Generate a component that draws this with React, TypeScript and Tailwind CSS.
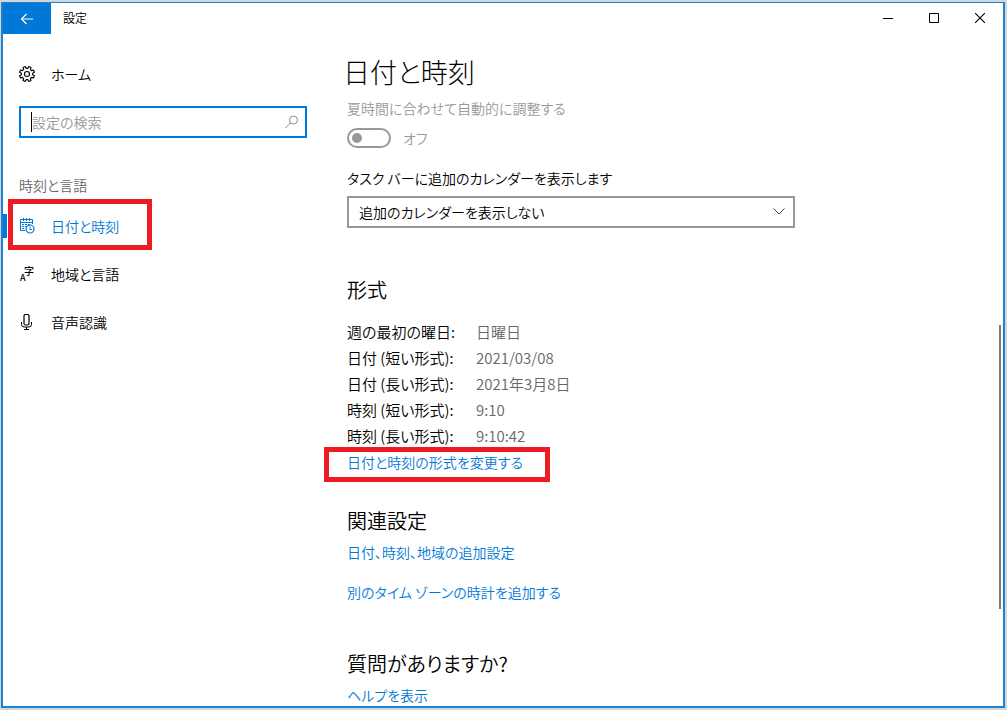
import type { ReactNode } from "react";

type NavItem = {
  label: string;
  icon: ReactNode;
  active?: boolean;
};

// eight flat-topped teeth around a 16px circle
const getGearPath = () => {
  const points: string[] = [];

  for (let i = 0; i < 8; i++) {
    const base = i * 45 + 22.5;

    [
      [-14, 5.7],
      [-9, 7.6],
      [9, 7.6],
      [14, 5.7],
    ].forEach(([offset, radius]) => {
      const angle = ((base + offset) * Math.PI) / 180;
      points.push(
        `${(8 + radius * Math.cos(angle)).toFixed(2)} ${(8 + radius * Math.sin(angle)).toFixed(2)}`,
      );
    });
  }

  return `M${points.join("L")}Z`;
};

const GearIcon = () => (
  <svg viewBox="0 0 16 16" className="size-4" fill="none" stroke="currentColor" aria-hidden="true">
    <path d={getGearPath()} strokeWidth="1.1" strokeLinejoin="round" />
    <circle cx="8" cy="8" r="2.5" strokeWidth="1.1" />
  </svg>
);

const CalendarClockIcon = () => (
  <svg viewBox="0 0 16 16" className="size-4" fill="none" stroke="currentColor" aria-hidden="true">
    <path d="M6 12.5H1.5V1.5H13.5V6M1.5 4.5H13.5M4.5 0V3M7.5 0V3M10.5 0V3" />
    <path d="M3 6.5H12M3 8.5H7M3 10.5H6" strokeDasharray="2 1" />
    <circle cx="11" cy="11" r="4" strokeWidth="1.2" />
    <path d="M11 8.5V11.5H13" />
  </svg>
);

const LanguageIcon = () => (
  <svg viewBox="0 0 16 16" className="size-4 overflow-visible" fill="currentColor" aria-hidden="true">
    <text x="1" y="15" fontSize="9" fontWeight="500">
      A
    </text>
    <text x="5" y="9" fontSize="10" fontWeight="500">
      字
    </text>
  </svg>
);

const MicIcon = () => (
  <svg viewBox="0 0 16 16" className="size-4" fill="none" stroke="currentColor" aria-hidden="true">
    <rect x="5" y="0.5" width="5" height="10.5" rx="1.5" strokeWidth="1.2" />
    <path d="M2.5 8V10.5Q2.5 13 5 13H10Q12.5 13 12.5 10.5V8M7.5 13V15.5M5 15.5H10" />
  </svg>
);

const NAV_ITEMS: NavItem[] = [
  { label: "日付と時刻", icon: <CalendarClockIcon />, active: true },
  { label: "地域と言語", icon: <LanguageIcon /> },
  { label: "音声認識", icon: <MicIcon /> },
];

const FORMATS = [
  ["週の最初の曜日:", "日曜日"],
  ["日付 (短い形式):", "2021/03/08"],
  ["日付 (長い形式):", "2021年3月8日"],
  ["時刻 (短い形式):", "9:10"],
  ["時刻 (長い形式):", "9:10:42"],
];

const TitleBar = () => (
  <header className="flex h-[31px] items-start">
    <button
      type="button"
      aria-label="戻る"
      className="flex h-full w-12 items-center justify-center bg-[#0078d7] text-white"
    >
      <svg viewBox="0 0 14 12" className="h-3 w-3.5" fill="none" stroke="currentColor" strokeWidth="1.2">
        <path d="M13 6H1.5M6.5 1L1.5 6L6.5 11" />
      </svg>
    </button>
    <span className="pl-3 text-[12px] leading-[30px]">設定</span>

    <div className="ml-auto flex h-[30px]">
      <button type="button" aria-label="最小化" className="flex w-[46px] items-center justify-center">
        <svg viewBox="0 0 10 10" className="size-2.5" stroke="currentColor">
          <path d="M0 5.5H10" />
        </svg>
      </button>
      <button type="button" aria-label="最大化" className="flex w-[46px] items-center justify-center">
        <svg viewBox="0 0 10 10" className="size-2.5" fill="none" stroke="currentColor">
          <path d="M0.5 0.5H9.5V9.5H0.5Z" />
        </svg>
      </button>
      <button type="button" aria-label="閉じる" className="flex w-[46px] items-center justify-center">
        <svg viewBox="0 0 10 10" className="size-2.5" stroke="currentColor" strokeWidth="1.1">
          <path d="M0 0L10 10M10 0L0 10" />
        </svg>
      </button>
    </div>
  </header>
);

const Sidebar = () => (
  <aside className="w-80 shrink-0 pt-4">
    <a href="#home" className="flex h-12 items-center gap-4 pl-4">
      <GearIcon />
      ホーム
    </a>

    <div className="mx-4 mt-2 flex h-8 items-center border-2 border-[#0078d7] pr-1.5 pl-2.5">
      <span className="h-5 w-px bg-black" />
      <input
        type="text"
        aria-label="設定の検索"
        placeholder="設定の検索"
        className="h-5 min-w-0 flex-1 leading-5 outline-none placeholder:text-[#999999]"
      />
      <svg viewBox="0 0 14 14" className="size-3.5 text-[#8a8a8a]" fill="none" stroke="currentColor" aria-hidden="true">
        <circle cx="8.5" cy="5" r="4" />
        <path d="M5.5 8L0.5 13" />
      </svg>
    </div>

    <h2 className="mt-[35px] pl-4 leading-6 text-[#666666]">時刻と言語</h2>

    <nav className="mt-[5px]">
      {NAV_ITEMS.map((item) => (
        <a
          key={item.label}
          href="#"
          aria-current={item.active ? "page" : undefined}
          className={
            item.active
              ? "relative flex h-12 items-center gap-4 pl-4 text-[#0078d7]"
              : "flex h-12 items-center gap-4 pl-4"
          }
        >
          {item.active && (
            <>
              <span className="absolute top-3 left-0 h-6 w-1 bg-[#0078d7]" />
              <span className="absolute -top-[3px] left-[5px] h-[51px] w-36 border-5 border-[#ed1c24]" />
            </>
          )}
          {item.icon}
          {item.label}
        </a>
      ))}
    </nav>
  </aside>
);

const DateTimePage = () => (
  <main className="min-w-0 flex-1 pt-[18px] pl-6">
    <h1 className="-ml-1 text-[27px] leading-10 font-light">日付と時刻</h1>

    <label htmlFor="dst" className="mt-1 block leading-6 text-[#999999]">
      夏時間に合わせて自動的に調整する
    </label>
    <div className="mt-2 flex h-5 items-center gap-3 text-[#999999]">
      <input
        id="dst"
        type="checkbox"
        role="switch"
        disabled
        className="flex h-5 w-11 appearance-none items-center rounded-full border-2 border-[#999999] pl-[3px] before:size-2.5 before:rounded-full before:bg-[#999999] before:content-['']"
      />
      <span>オフ</span>
    </div>

    <label htmlFor="calendar" className="mt-[18px] block leading-6">
      タスク バーに追加のカレンダーを表示します
    </label>
    <div className="relative mt-1.5 max-w-md">
      <select
        id="calendar"
        className="block h-8 w-full appearance-none border-2 border-[#999999] bg-white pl-2.5"
      >
        <option>追加のカレンダーを表示しない</option>
      </select>
      <svg
        viewBox="0 0 12 7"
        className="pointer-events-none absolute top-3 right-2.5 h-[7px] w-3 text-[#444444]"
        fill="none"
        stroke="currentColor"
        aria-hidden="true"
      >
        <path d="M0.5 0.5L6 6L11.5 0.5" />
      </svg>
    </div>

    <h2 className="mt-[46px] text-[20px] leading-8 font-[350]">形式</h2>
    <table className="mt-[13px] text-[15px]">
      <tbody>
        {FORMATS.map(([name, value]) => (
          <tr key={name} className="h-[26px]">
            <th scope="row" className="w-[129px] p-0 text-left leading-5 font-[350]">
              {name}
            </th>
            <td className="p-0 leading-5 text-[#666666]">{value}</td>
          </tr>
        ))}
      </tbody>
    </table>
    <div className="relative mt-[3px] w-fit leading-5">
      <a href="#format" className="block text-[#0078d7]">
        日付と時刻の形式を変更する
      </a>
      <span className="pointer-events-none absolute -top-[5px] -left-[23px] h-[35px] w-[226px] border-5 border-[#ed1c24]" />
    </div>

    <h2 className="mt-[33px] text-[20px] leading-8 font-[350]">関連設定</h2>
    <a href="#additional" className="mt-[5px] block w-fit leading-5 text-[#0078d7]">
      日付、時刻、地域の追加設定
    </a>
    <a href="#clocks" className="mt-5 block w-fit leading-5 text-[#0078d7]">
      別のタイム ゾーンの時計を追加する
    </a>

    <h2 className="mt-[46px] text-[20px] leading-8 font-[350]">質問がありますか?</h2>
    <a href="#help" className="mt-[5px] block w-fit leading-5 text-[#0078d7]">
      ヘルプを表示
    </a>
  </main>
);

const ScrollBar = () => (
  <div className="mr-0.5 flex w-0.5 flex-col" aria-hidden="true">
    <span className="flex-[291]" />
    <span className="flex-[284] bg-[#7a7a7a]" />
    <span className="flex-[97]" />
  </div>
);

export default function App() {
  return (
    <div className="flex min-h-screen bg-[#d6d6d6] pt-0.5 pr-0.5 pb-0.5 pl-px font-['Noto_Sans_CJK_JP',sans-serif] text-[14px] font-[350] text-black [font-feature-settings:'palt']">
      <div className="flex flex-1 flex-col border-2 border-t border-[#1883d7] bg-white">
        <TitleBar />
        <div className="flex flex-1">
          <Sidebar />
          <DateTimePage />
          <ScrollBar />
        </div>
      </div>
    </div>
  );
}
